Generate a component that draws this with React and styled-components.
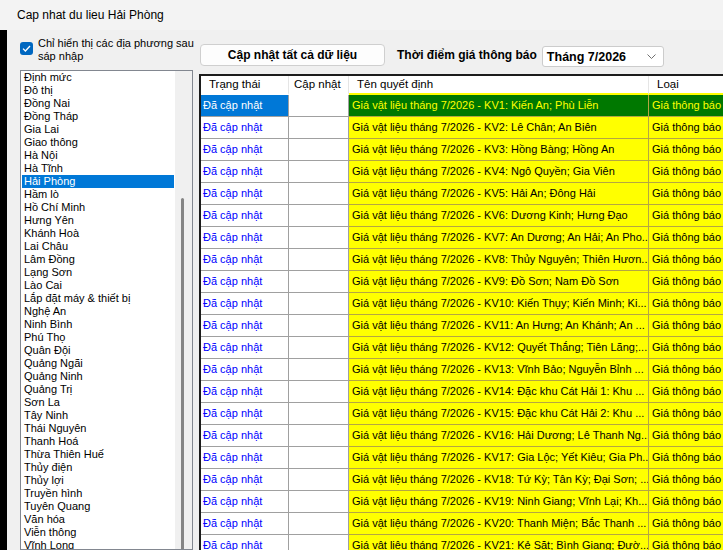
import styled, { createGlobalStyle } from 'styled-components';

const GlobalStyle = createGlobalStyle`
  html, body {
    margin: 0;
    padding: 0;
    background: #f0f0f0;
  }
  * {
    box-sizing: border-box;
  }
`;

const Window = styled.div`
  width: 723px;
  height: 550px;
  overflow: hidden;
  display: flex;
  flex-direction: column;
  background: #f0f0f0;
  font-family: "Liberation Sans", Arial, sans-serif;
  color: #000;
`;

const TitleBar = styled.div`
  height: 30px;
  flex: none;
  padding-left: 17px;
  line-height: 30px;
  font-size: 12px;
  background: #f3f3f3;
`;

const Body = styled.div`
  flex: 1;
  display: flex;
  min-height: 0;
`;

const EdgeStrip = styled.div`
  width: 7px;
  flex: none;
  background: #000;
`;

const LeftPanel = styled.div`
  width: 192px;
  flex: none;
  display: flex;
  flex-direction: column;
  padding: 7px 6px 0 13px;
`;

const CheckRow = styled.label`
  display: flex;
  align-items: flex-start;
  gap: 5px;
  font-size: 11px;
  line-height: 13px;
  white-space: nowrap;
`;

const CheckBox = styled.span`
  width: 13px;
  height: 13px;
  margin-top: 5px;
  flex: none;
  border-radius: 3px;
  background: #0067c0;
  display: flex;
  align-items: center;
  justify-content: center;
`;

const ListBox = styled.div`
  flex: 1;
  margin-top: 7px;
  display: flex;
  border: 1px solid #828790;
  background: #fff;
  min-height: 0;
`;

const ListItems = styled.div`
  flex: 1;
  overflow: hidden;
`;

const ListItem = styled.div`
  height: 13px;
  line-height: 13px;
  margin: 0 1px;
  padding-left: 2px;
  font-size: 11px;
  white-space: nowrap;
  background: ${p => (p.$selected ? '#0078d7' : 'transparent')};
  color: ${p => (p.$selected ? '#fff' : '#000')};
`;

const ScrollTrack = styled.div`
  width: 17px;
  flex: none;
  background: #f0f0f0;
  display: flex;
  flex-direction: column;
`;

const ScrollThumb = styled.div`
  flex: 1;
  width: 3px;
  margin: 127px 0 0 6px;
  border-radius: 2px 2px 0 0;
  background: #858585;
`;

const RightPanel = styled.div`
  flex: 1;
  display: flex;
  flex-direction: column;
  min-width: 0;
`;

const Toolbar = styled.div`
  height: 44px;
  flex: none;
  display: flex;
  align-items: flex-start;
  padding: 14px 0 0 1px;
`;

const ActionButton = styled.button`
  width: 185px;
  height: 22px;
  border: 1px solid #cfcfcf;
  border-radius: 4px;
  background: #fdfdfd;
  font-family: inherit;
  font-size: 12px;
  font-weight: bold;
  color: #000;
  padding: 0;
`;

const FieldLabel = styled.span`
  margin-left: 12px;
  line-height: 22px;
  font-size: 12px;
  font-weight: bold;
  white-space: nowrap;
`;

const Combo = styled.div`
  width: 122px;
  height: 21px;
  margin: 2px 0 0 5px;
  border: 1px solid #cccccc;
  border-radius: 3px;
  background: #fff;
  display: flex;
  align-items: center;
  justify-content: space-between;
  padding: 0 7px 0 4px;
  font-size: 12.5px;
  font-weight: bold;
`;

const Grid = styled.div`
  flex: 1;
  border-top: 2px solid #1c1c1c;
  border-left: 2px solid #1c1c1c;
  background: #fff;
  overflow: hidden;
`;

const GridRow = styled.div`
  display: grid;
  grid-template-columns: 88px 60px 300px 120px;
`;

const HeadCell = styled.div`
  height: 19px;
  line-height: 17px;
  padding-left: ${p => p.$pad || 7}px;
  font-size: 11.5px;
  border-right: 1px solid #e5e5e5;
  border-bottom: 2px solid ${p => (p.$accent ? '#ffff00' : '#fff')};
  white-space: nowrap;
`;

const toneStyles = {
  plain: { bg: '#fff', fg: '#0000ff', line: '#a0a0a0' },
  empty: { bg: '#fff', fg: '#000', line: '#a0a0a0' },
  selected: { bg: '#0078d7', fg: '#fff', line: '#a0a0a0' },
  yellow: { bg: '#ffff00', fg: '#000', line: '#b5a642' },
  green: { bg: '#007800', fg: '#ffff00', line: '#b5a642' },
};

const Cell = styled.div`
  height: 22px;
  line-height: 21px;
  padding-left: ${p => p.$pad || 3}px;
  font-size: 11px;
  white-space: nowrap;
  overflow: hidden;
  background: ${p => toneStyles[p.$tone].bg};
  color: ${p => toneStyles[p.$tone].fg};
  border-right: 1px solid ${p => toneStyles[p.$tone].line};
  border-bottom: 1px solid ${p => toneStyles[p.$tone].line};
`;

const provinces = [
  'Định mức', 'Đô thị', 'Đồng Nai', 'Đồng Tháp', 'Gia Lai', 'Giao thông', 'Hà Nội',
  'Hà Tĩnh', 'Hải Phòng', 'Hầm lò', 'Hồ Chí Minh', 'Hưng Yên', 'Khánh Hoà', 'Lai Châu',
  'Lâm Đồng', 'Lạng Sơn', 'Lào Cai', 'Lắp đặt máy & thiết bị', 'Nghệ An', 'Ninh Bình',
  'Phú Thọ', 'Quân Đội', 'Quảng Ngãi', 'Quảng Ninh', 'Quảng Trị', 'Sơn La', 'Tây Ninh',
  'Thái Nguyên', 'Thanh Hoá', 'Thừa Thiên Huế', 'Thủy điện', 'Thủy lợi', 'Truyền hình',
  'Tuyên Quang', 'Văn hóa', 'Viễn thông', 'Vĩnh Long',
];

const areas = [
  'Kiến An; Phù Liễn', 'Lê Chân; An Biên', 'Hồng Bàng; Hồng An', 'Ngô Quyền; Gia Viên',
  'Hải An; Đông Hải', 'Dương Kinh; Hưng Đạo', 'An Dương; An Hải; An Pho...',
  'Thủy Nguyên; Thiên Hươn...', 'Đồ Sơn; Nam Đồ Sơn', 'Kiến Thụy; Kiến Minh; Ki...',
  'An Hưng; An Khánh; An ...', 'Quyết Thắng; Tiên Lãng;...', 'Vĩnh Bảo; Nguyễn Bỉnh ...',
  'Đặc khu Cát Hải 1: Khu ...', 'Đặc khu Cát Hải 2: Khu ...', 'Hải Dương; Lê Thanh Ng...',
  'Gia Lộc; Yết Kiêu; Gia Ph...', 'Tứ Kỳ; Tân Kỳ; Đại Sơn; ...', 'Ninh Giang; Vĩnh Lại; Kh...',
  'Thanh Miện; Bắc Thanh ...', 'Kẻ Sặt; Bình Giang; Đườ...',
];

const App = () => {
  return (
    <Window>
      <GlobalStyle />
      <TitleBar>Cap nhat du lieu Hải Phòng</TitleBar>
      <Body>
        <EdgeStrip />
        <LeftPanel>
          <CheckRow>
            <CheckBox>
              <svg width="9" height="7" viewBox="0 0 9 7">
                <path d="M1 3.6 L3.4 6 L8 1" fill="none" stroke="#fff" strokeWidth="1.3" />
              </svg>
            </CheckBox>
            <span>Chỉ hiển thị các địa phương sau<br />sáp nhập</span>
          </CheckRow>
          <ListBox>
            <ListItems>
              {provinces.map(name => (
                <ListItem key={name} $selected={name === 'Hải Phòng'}>{name}</ListItem>
              ))}
            </ListItems>
            <ScrollTrack>
              <ScrollThumb />
            </ScrollTrack>
          </ListBox>
        </LeftPanel>
        <RightPanel>
          <Toolbar>
            <ActionButton>Cập nhật tất cả dữ liệu</ActionButton>
            <FieldLabel>Thời điểm giá thông báo</FieldLabel>
            <Combo>
              <span>Tháng 7/2026</span>
              <svg width="9" height="5" viewBox="0 0 9 5">
                <path d="M0.5 0.5 L4.5 4.5 L8.5 0.5" fill="none" stroke="#707070" strokeWidth="1" />
              </svg>
            </Combo>
          </Toolbar>
          <Grid>
            <GridRow>
              <HeadCell $pad={8}>Trạng thái</HeadCell>
              <HeadCell $pad={5}>Cập nhật</HeadCell>
              <HeadCell $pad={8} $accent>Tên quyết định</HeadCell>
              <HeadCell $pad={8} $accent>Loại</HeadCell>
            </GridRow>
            {areas.map((area, i) => {
              const first = i === 0;
              const tone = first ? 'green' : 'yellow';
              return (
                <GridRow key={i}>
                  <Cell $tone={first ? 'selected' : 'plain'} $pad={2}>Đã cập nhật</Cell>
                  <Cell $tone="empty" />
                  <Cell $tone={tone}>Giá vật liệu tháng 7/2026 - KV{i + 1}: {area}</Cell>
                  <Cell $tone={tone}>Giá thông báo</Cell>
                </GridRow>
              );
            })}
          </Grid>
        </RightPanel>
      </Body>
    </Window>
  );
};

export default App;
